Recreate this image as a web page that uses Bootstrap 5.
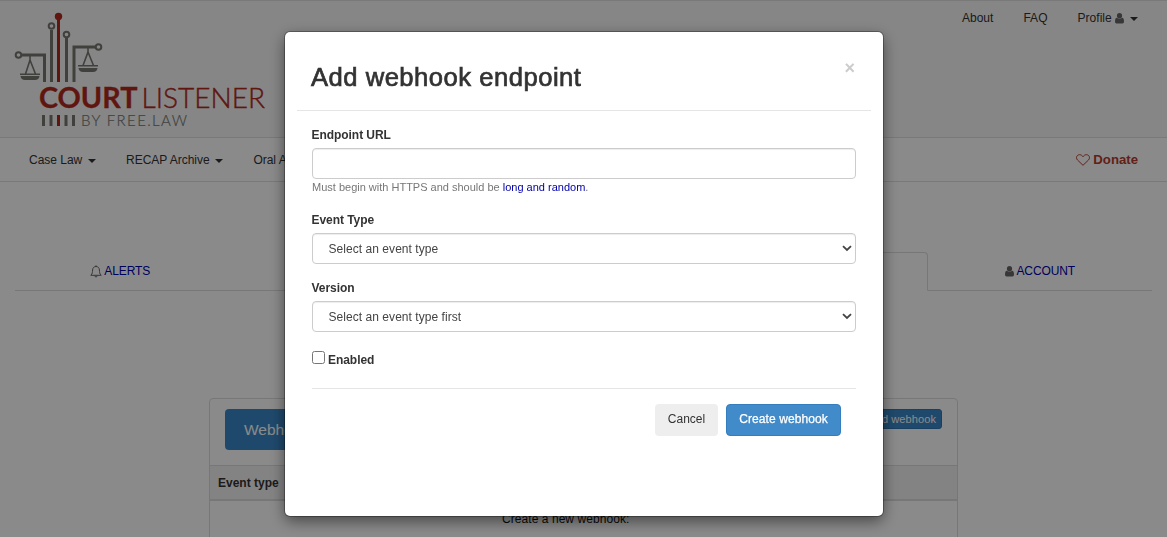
<!DOCTYPE html>
<html lang="en">
<head>
<meta charset="utf-8">
<meta name="viewport" content="width=device-width, initial-scale=1">
<title>Add webhook endpoint – CourtListener</title>
<link href="https://cdn.jsdelivr.net/npm/bootstrap@5.3.0/dist/css/bootstrap.min.css" rel="stylesheet">
<style>
  html, body { height: 100%; overflow: hidden; }
  body { font-family: "Liberation Sans", Arial, sans-serif; font-size: 12px; line-height: 18px; color: #333; background: #fff; }
  a { color: #00a; text-decoration: none; }
  .page { height: 537px; overflow: hidden; }
  .site-header { height: 138px; background: #f8f8f8; border-top: 1px solid #e0e0e0; border-bottom: 1px solid #e0e0e0; padding: 0 15px 0 14px; }
  .site-logo { margin: 11px 0 0; display: block; }
  .top-links { gap: 30px; padding: 8px 14px 0 0; }
  .top-links a, .main-bar a { color: #333; }
  .top-links a { letter-spacing: .03px; }
  .main-bar { height: 43px; border-bottom: 1px solid #e0e0e0; padding: 0 29px; gap: 30px; margin-bottom: 1px; height: 44px; margin-bottom: 0; }
  .main-bar a { letter-spacing: -.02px; }
  .main-bar .donate { color: #b53c2c; font-weight: bold; font-size: 13.2px; letter-spacing: 0; }
  .caret-down { display: inline-block; border: 4px solid transparent; border-top-color: currentColor; border-bottom: 0; vertical-align: 1px; margin-left: 2.5px; }
  .icon-grey { color: #666; }
  .tab-row { margin: 70px 15px 0; height: 39px; }
  .tab-row > div { border-bottom: 1px solid #ddd; display: flex; align-items: center; justify-content: center; }
  .tab-row .edge { width: 224px; flex: none; }
  .tab-row .edge:first-child { width: 210px; }
  .tab-row .current { border: 1px solid #ddd; border-bottom-color: transparent; border-radius: 4px 4px 0 0; width: 229px; }
  .tab-row a { letter-spacing: -.1px; }
  .hook-panel { width: 749px; margin: 107px auto 0 209px; border: 1px solid #ddd; border-radius: 4px; height: 200px; }
  .hook-head { height: 66px; padding: 10px 15px; }
  .hook-title { background: #3a87c7; color: #fff; font-size: 15.5px; height: 41px; padding: 0 19px; border-radius: 4px; }
  .hook-add { background: #3a87c7; border: 1px solid #2f76b1; color: #fff; font-size: 11px; line-height: 18px; padding: 0 5px; border-radius: 3px; letter-spacing: .1px; }
  .hook-cols { height: 36px; border-top: 1px solid #ddd; border-bottom: 2px solid #ddd; background: #f3f3f3; padding: 0 8px; font-weight: bold; }
  .hook-empty { padding: 9px 0 0 292px; color: #111; letter-spacing: .06px; }
  .modal-backdrop.show { opacity: .46; }
  .modal { overflow: hidden; }
  .modal-dialog { width: 598px; max-width: none; margin: 32px auto 0 285px; }
  .modal-content { height: 484px; border: 0; border-radius: 5px; padding: 12px; box-shadow: 0 0 0 1px rgba(0,0,0,.3), 0 5px 15px rgba(0,0,0,.5); color: #333; }
  .modal-header { height: 67px; padding: 0 16px 0 14px; border-bottom: 1px solid #e5e5e5; align-items: flex-start; }
  .modal-title { font-size: 25.6px; line-height: 30px; font-weight: normal; letter-spacing: .5px; -webkit-text-stroke: .7px #333; margin-top: 18px; }
  .modal-x { border: 0; background: none; padding: 0; font-weight: bold; font-size: 18px; line-height: 18px; color: #ccc; margin-top: 15px; }
  .modal-body { padding: 15px 15px 0; }
  .field-label { display: block; font-weight: bold; line-height: 18px; margin: 0 0 4px -.5px; letter-spacing: -.05px; }
  .modal-body .form-control { height: 31px; border: 1px solid #ccc; border-radius: 4px; box-shadow: inset 0 1px 1px rgba(0,0,0,.075); font-size: 12px; color: #444; padding: 0 3px 0 15.5px; letter-spacing: .05px; }
  .hint { font-size: 11px; line-height: 17px; color: #777; }
  .hint-gap { margin-bottom: 15px; }
  .later-label { margin-top: 15px; }
  .enabled-row { margin-top: 19px; gap: 3px; }
  .enabled-box { width: 13px; height: 13px; border: 1px solid #767676; border-radius: 2.5px; }
  .foot-row { border-top: 1px solid #e5e5e5; margin-top: 19px; padding: 15px 15px 0; gap: 8px; }
  .foot-row .btn { height: 32px; font-size: 12px; line-height: 18px; padding: 5px 0 7px; border-radius: 4px; }
  .btn-cancel { background: #eee; color: #333; width: 63px; }
  .btn-create, .btn-create:hover { background: #428bca; border-color: #357ebd; color: #fff; width: 115px; letter-spacing: .08px; -webkit-text-stroke: .25px #fff; }
</style>
</head>
<body>
<div class="page">
<header class="site-header d-flex justify-content-between align-items-start">
  <svg class="site-logo" width="252" height="117" viewBox="14 12 252 117">
    <g fill="none" stroke="#777872" stroke-width="3">
      <path d="M44.500 82V55H22M74 82V47H95M51.500 82V30M66.500 82V38"/>
      <g stroke-width="2"><circle cx="18.500" cy="55" r="2.800"/><circle cx="98.500" cy="47" r="2.800"/><circle cx="51.500" cy="26" r="2.800"/><circle cx="66.500" cy="34.500" r="2.800"/></g>
      <path stroke-width="1.600" d="M30 55v5L25.500 74M30 60L35.500 74M20 74.200H40M88 47v5L83 65.500M88 52L93.500 65.500M78 65.700H98"/>
    </g>
    <path fill="#777872" d="M20.500 76H39.500Q39 80 35 80H25Q21 80 20.500 76zM78.500 68H97.500Q97 72 93 72H83Q79 72 78.500 68zM42 115h3v11h-3zM49.500 115h3v11h-3zM64.500 115h3v11h-3zM72 115h3v11h-3z"/>
    <path fill="#b12a1c" d="M57 17h3v65h-3zM57 115h3v11h-3z"/><circle cx="58.500" cy="16.500" r="3.700" fill="#b12a1c"/>
    <g font-family="Lato, sans-serif" fill="#b12a1c">
      <text x="39" y="108" font-size="28" font-weight="bold" stroke="#b12a1c" stroke-width=".3" textLength="98.500" lengthAdjust="spacingAndGlyphs">COURT</text>
      <text x="141.500" y="108" font-size="28" font-weight="300" stroke="#b12a1c" stroke-width=".4" textLength="123.500" lengthAdjust="spacingAndGlyphs">LISTENER</text>
      <text x="81" y="125.500" font-size="15" font-weight="300" fill="#777872" stroke="#777872" stroke-width=".2" textLength="106">BY FREE.LAW</text>
    </g>
  </svg>
  <nav class="top-links d-flex">
    <a href="#">About</a><a href="#">FAQ</a>
    <a href="#">Profile <svg class="icon-grey" width="9" height="11" viewBox="0 0 9 11" fill="currentColor"><circle cx="4.500" cy="2.700" r="2.600"/><path d="M1.800 4.700Q4.500 6.500 7.200 4.700Q9 5 9 8.500Q9 10.500 7.500 10.500H1.500Q0 10.500 0 8.500Q0 5 1.800 4.700z"/></svg> <span class="caret-down"></span></a>
  </nav>
</header>
<nav class="main-bar d-flex align-items-center">
  <a href="#">Case Law <span class="caret-down"></span></a>
  <a href="#">RECAP Archive <span class="caret-down"></span></a>
  <a href="#">Oral Arguments <span class="caret-down"></span></a>
  <a href="#" class="donate ms-auto"><svg width="14" height="12" viewBox="0 0 14 12" fill="none" stroke="currentColor"><path d="M7 11.300L1.500 6C-.5 3.800.8.700 3.600.7 5.300.7 6.400 1.800 7 2.700 7.600 1.800 8.700.7 10.400.7 13.200.7 14.500 3.800 12.500 6z"/></svg> Donate</a>
</nav>
<div class="tab-row d-flex">
  <div class="edge"><a href="#"><svg class="icon-grey" width="12" height="13" viewBox="0 0 12 13" fill="none" stroke="currentColor"><path d="M6 .3v1M.8 10.300C2.500 8.700 2.500 7 2.600 5 2.700 2.800 4 1.500 6 1.500S9.300 2.800 9.400 5C9.500 7 9.500 8.700 11.200 10.300zM4.800 10.600Q5 12 6 12T7.200 10.600"/></svg> ALERTS</a></div>
  <div class="flex-fill"></div>
  <div class="current"></div>
  <div class="edge"><a href="#"><svg class="icon-grey" width="9" height="11" viewBox="0 0 9 11" fill="currentColor"><circle cx="4.500" cy="2.700" r="2.600"/><path d="M1.800 4.700Q4.500 6.500 7.200 4.700Q9 5 9 8.500Q9 10.500 7.500 10.500H1.500Q0 10.500 0 8.500Q0 5 1.800 4.700z"/></svg> ACCOUNT</a></div>
</div>
<section class="hook-panel">
  <div class="hook-head d-flex justify-content-between align-items-start">
    <div class="hook-title d-flex align-items-center">Webhooks</div>
    <a href="#" class="hook-add">Add webhook</a>
  </div>
  <div class="hook-cols d-flex align-items-center">Event type</div>
  <div class="hook-empty">Create a new webhook:</div>
</section>
</div>

<div class="modal-backdrop show"></div>
<div class="modal d-block" tabindex="-1">
  <div class="modal-dialog">
    <div class="modal-content">
      <div class="modal-header">
        <h4 class="modal-title">Add webhook endpoint</h4>
        <button class="modal-x" aria-label="Close">×</button>
      </div>
      <form class="modal-body">
        <label class="field-label" for="url">Endpoint URL</label>
        <input class="form-control" id="url" type="text">
        <div class="hint hint-gap">Must begin with HTTPS and should be <a href="#">long and random</a>.</div>
        <span class="field-label">Event Type</span>
        <div class="form-control d-flex align-items-center justify-content-between">Select an event type
          <svg width="10" height="7" viewBox="0 0 10 7" fill="none" stroke="#444" stroke-width="1.800"><path d="M1 1.200L5 5L9 1.200"/></svg></div>
        <span class="field-label later-label">Version</span>
        <div class="form-control d-flex align-items-center justify-content-between">Select an event type first
          <svg width="10" height="7" viewBox="0 0 10 7" fill="none" stroke="#444" stroke-width="1.800"><path d="M1 1.200L5 5L9 1.200"/></svg></div>
        <div class="enabled-row d-flex align-items-start">
          <span class="enabled-box"></span><span class="field-label m-0">Enabled</span>
        </div>
        <div class="foot-row d-flex justify-content-end">
          <button type="button" class="btn btn-cancel">Cancel</button>
          <button type="button" class="btn btn-create">Create webhook</button>
        </div>
      </form>
    </div>
  </div>
</div>
<script src="https://cdn.jsdelivr.net/npm/bootstrap@5.3.0/dist/js/bootstrap.bundle.min.js"></script>
</body>
</html>
